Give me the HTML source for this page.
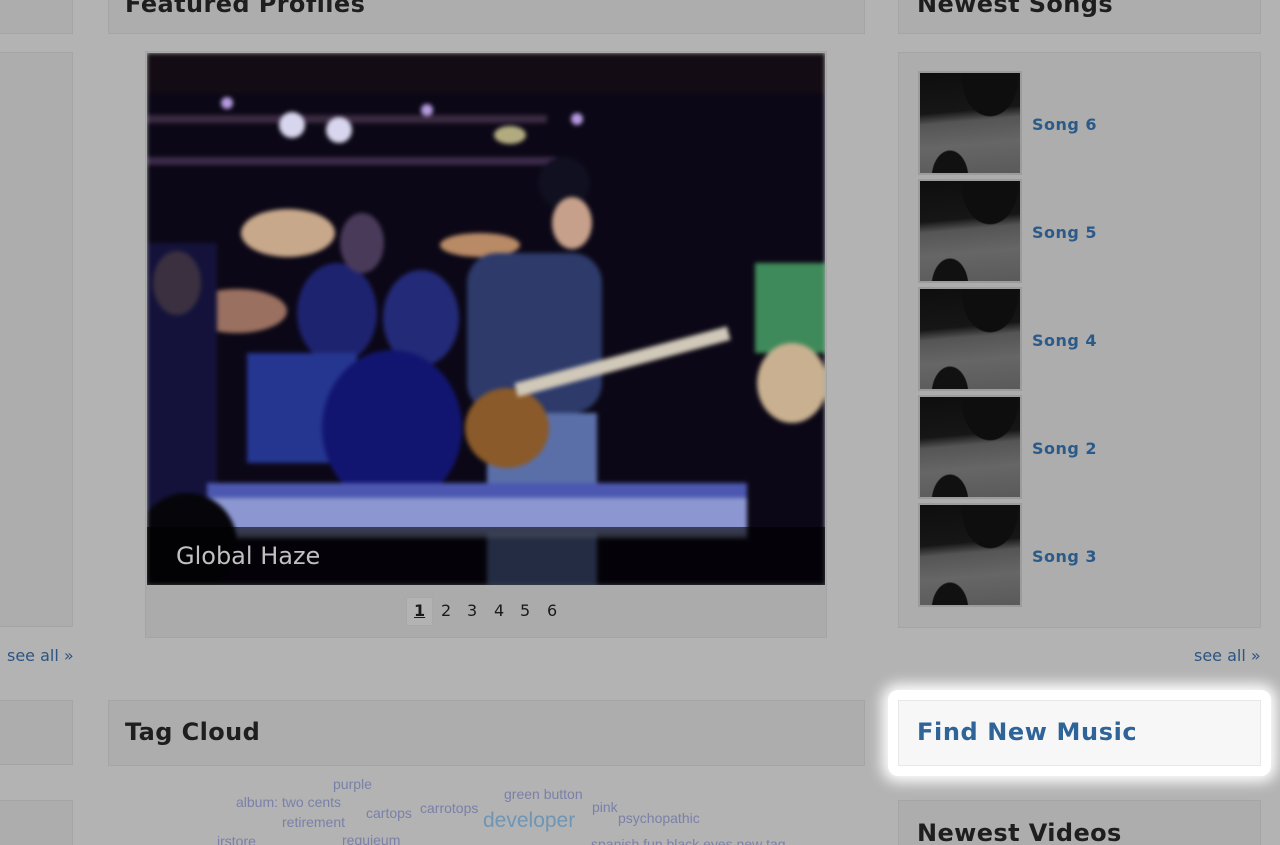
<!DOCTYPE html>
<html><head><meta charset="utf-8"><style>
*{margin:0;padding:0;box-sizing:border-box}
html,body{width:1280px;height:845px;overflow:hidden}
body{background:#b3b3b3;font-family:"DejaVu Sans","Liberation Sans",sans-serif;position:relative}
.p{position:absolute;background:#adadad;border:1px solid #a5a5a5}
.h{font-weight:bold;font-size:24px;color:#1e1e1e;position:absolute;letter-spacing:.4px}
.lnk{position:absolute;color:#2c5582;font-size:16px}
.song{position:absolute;left:918px;width:104px;height:104px;border:2px solid #9c9c9c;background:linear-gradient(175deg,#0e0e0e 0%,#161616 38%,#555 48%,#666 70%,#5a5a5a 100%);overflow:hidden}
.song i{position:absolute;left:0;top:0;width:100%;height:100%;background:radial-gradient(ellipse at 30% 105%,#111 0 18%,transparent 19%),radial-gradient(ellipse at 70% 5%,#0e0e0e 0 28%,transparent 29%)}
.st{position:absolute;left:1032px;font-weight:bold;font-size:16px;color:#2b5a89;letter-spacing:.5px}
.tag{position:absolute;font-family:"Liberation Sans",sans-serif;color:#7a80a8;font-size:14px}
.pg{position:absolute;top:601px;font-size:16px;color:#1a1a1a}
</style></head><body>
<div class="p" style="left:-2px;top:-10px;width:75px;height:44px"></div>
<div class="p" style="left:-2px;top:52px;width:75px;height:575px"></div>
<div class="lnk" style="left:7px;top:646px">see all »</div>
<div class="p" style="left:-2px;top:700px;width:75px;height:65px"></div>
<div class="p" style="left:-2px;top:800px;width:75px;height:60px"></div>

<div class="p" style="left:108px;top:-10px;width:757px;height:44px"></div>
<div class="h" style="left:125px;top:-10px">Featured Profiles</div>
<div class="p" style="left:145px;top:51px;width:682px;height:587px;background:#ababab"></div>
<div style="position:absolute;left:147px;top:53px;width:678px;height:532px;overflow:hidden">
<svg width="678" height="532" viewBox="0 0 678 532" style="filter:blur(2px)">
<rect width="678" height="532" fill="#0b0716"/>
<rect x="0" y="0" width="678" height="40" fill="#140c14"/>
<rect x="0" y="62" width="400" height="8" fill="#3a2a40"/>
<rect x="0" y="104" width="410" height="8" fill="#3b2a48"/>
<circle cx="145" cy="72" r="13" fill="#d8d6ee"/><circle cx="192" cy="77" r="13" fill="#d8d6ee"/>
<circle cx="80" cy="50" r="6" fill="#b59ae0"/><circle cx="280" cy="57" r="6" fill="#b59ae0"/><circle cx="430" cy="66" r="6" fill="#b59ae0"/>
<ellipse cx="363" cy="82" rx="16" ry="9" fill="#b3ab80"/>
<ellipse cx="141" cy="180" rx="47" ry="24" fill="#c8a88a"/>
<ellipse cx="333" cy="192" rx="40" ry="12" fill="#b88a66"/>
<ellipse cx="90" cy="258" rx="50" ry="22" fill="#9a7060"/>
<rect x="0" y="190" width="70" height="300" fill="#14123a"/>
<ellipse cx="30" cy="230" rx="24" ry="32" fill="#3a3040"/>
<ellipse cx="190" cy="260" rx="40" ry="50" fill="#1e2370"/>
<ellipse cx="274" cy="265" rx="38" ry="48" fill="#232a78"/>
<rect x="100" y="300" width="110" height="110" fill="#253690"/>
<ellipse cx="245" cy="375" rx="70" ry="78" fill="#121570"/>
<ellipse cx="215" cy="190" rx="22" ry="30" fill="#4a3a5a"/>
<rect x="320" y="200" width="135" height="160" rx="30" fill="#2d3a6a"/>
<circle cx="417" cy="130" r="26" fill="#101020"/>
<ellipse cx="425" cy="170" rx="20" ry="26" fill="#c6a08a"/>
<rect x="340" y="360" width="110" height="172" fill="#5a6fa8"/>
<ellipse cx="360" cy="375" rx="42" ry="40" fill="#8a5a2a"/>
<rect x="370" y="330" width="220" height="14" fill="#d0c8b8" transform="rotate(-15 370 340)"/>
<rect x="608" y="210" width="70" height="90" fill="#3f8a5a"/>
<ellipse cx="645" cy="330" rx="35" ry="40" fill="#c8b090"/>
<rect x="60" y="430" width="540" height="50" fill="#4c58b0"/>
<rect x="60" y="445" width="540" height="40" fill="#b8c2e8" opacity=".6"/>
<circle cx="40" cy="490" r="50" fill="#05050a"/>
</svg>
<div style="position:absolute;left:0;top:474px;width:678px;height:58px;background:rgba(0,0,0,.6)"></div>
<div style="position:absolute;left:29px;top:489px;font-size:24px;color:#c0c0c0">Global Haze</div>
</div>
<div style="position:absolute;left:406px;top:597px;width:27px;height:29px;background:#b3b3b3;border:1px solid #a8a8a8"></div>
<div class="pg" style="left:414px"><b style="text-decoration:underline">1</b></div>
<div class="pg" style="left:441px">2</div>
<div class="pg" style="left:467px">3</div>
<div class="pg" style="left:494px">4</div>
<div class="pg" style="left:520px">5</div>
<div class="pg" style="left:547px">6</div>
<div class="p" style="left:108px;top:700px;width:757px;height:66px"></div>
<div class="h" style="left:125px;top:718px">Tag Cloud</div>
<div class="tag" style="left:333px;top:776px">purple</div>
<div class="tag" style="left:236px;top:794px">album: two cents</div>
<div class="tag" style="left:366px;top:805px">cartops</div>
<div class="tag" style="left:420px;top:800px">carrotops</div>
<div class="tag" style="left:504px;top:786px">green button</div>
<div class="tag" style="left:592px;top:799px">pink</div>
<div class="tag" style="left:618px;top:810px">psychopathic</div>
<div class="tag" style="left:282px;top:814px">retirement</div>
<div class="tag" style="left:483px;top:809px;font-size:21px;color:#6f95b5">developer</div>
<div class="tag" style="left:217px;top:833px">irstore</div>
<div class="tag" style="left:342px;top:832px">requieum</div>
<div class="tag" style="left:591px;top:836px">spanish fun black eyes new tag</div>

<div class="p" style="left:898px;top:-10px;width:363px;height:44px"></div>
<div class="h" style="left:917px;top:-10px">Newest Songs</div>
<div class="p" style="left:898px;top:52px;width:363px;height:576px"></div>
<div class="song" style="top:71px"><i></i></div><div class="st" style="top:115px">Song 6</div>
<div class="song" style="top:179px"><i></i></div><div class="st" style="top:223px">Song 5</div>
<div class="song" style="top:287px"><i></i></div><div class="st" style="top:331px">Song 4</div>
<div class="song" style="top:395px"><i></i></div><div class="st" style="top:439px">Song 2</div>
<div class="song" style="top:503px"><i></i></div><div class="st" style="top:547px">Song 3</div>
<div class="lnk" style="left:1194px;top:646px">see all »</div>
<div style="position:absolute;left:888px;top:690px;width:383px;height:86px;background:#fff;box-shadow:0 0 14px 6px #fff;border-radius:10px"></div>
<div style="position:absolute;left:898px;top:700px;width:363px;height:66px;background:#f7f7f7;border:1px solid #e8e8e8"></div>
<div style="position:absolute;left:917px;top:718px;font-size:24px;font-weight:bold;color:#2f6499;letter-spacing:.6px">Find New Music</div>
<div class="p" style="left:898px;top:800px;width:363px;height:60px"></div>
<div class="h" style="left:917px;top:819px">Newest Videos</div>
</body></html>
